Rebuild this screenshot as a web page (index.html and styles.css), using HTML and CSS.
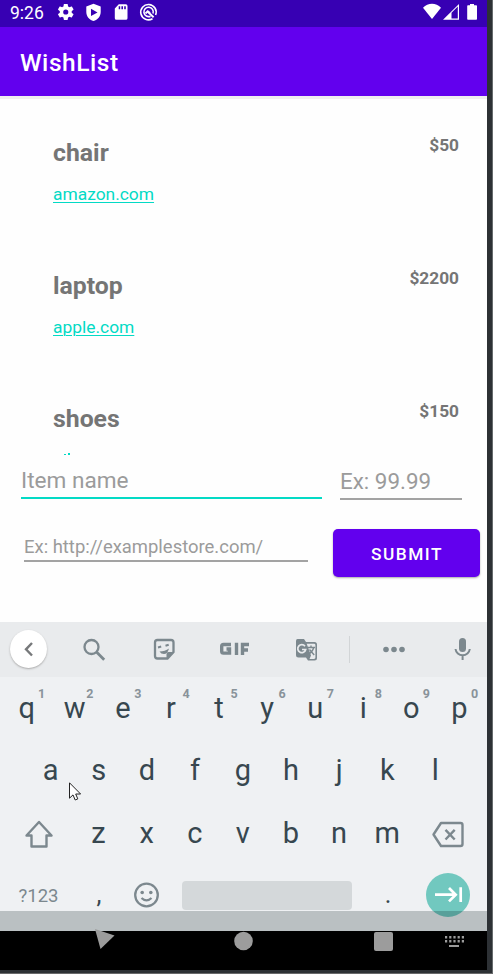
FILE: index.html
```html
<!DOCTYPE html>
<html lang="en">
<head>
<meta charset="utf-8">
<title>WishList</title>
<link rel="stylesheet" href="styles.css">
</head>
<body>
<main class="screen">
  <header class="status">
    <span class="clock">9:26</span>
    <svg class="status-icons" width="100" height="20" viewBox="0 0 100 20" fill="#fff">
      <path transform="translate(-1.200 -1) scale(.83)" d="M19.14 12.94c.04-.3.06-.61.06-.94s-.02-.64-.07-.94l2.03-1.58a.49.49 0 0 0 .12-.61l-1.92-3.32a.49.49 0 0 0-.59-.22l-2.39.96c-.5-.38-1.03-.7-1.62-.94L14.4 2.81a.48.48 0 0 0-.48-.41h-3.84a.47.47 0 0 0-.47.41l-.36 2.54c-.59.24-1.13.57-1.62.94l-2.39-.96a.48.48 0 0 0-.59.22L2.74 8.87a.47.47 0 0 0 .12.61l2.03 1.58c-.05.3-.09.63-.09.94s.02.64.07.94l-2.03 1.58a.49.49 0 0 0-.12.61l1.92 3.32c.12.22.37.29.59.22l2.39-.96c.5.38 1.03.7 1.62.94l.36 2.54c.05.24.24.41.48.41h3.84c.24 0 .44-.17.47-.41l.36-2.54c.59-.24 1.13-.56 1.62-.94l2.39.96c.22.08.47 0 .59-.22l1.92-3.32a.47.47 0 0 0-.12-.61zM12 15.1A3.1 3.1 0 1 1 12 8.900a3.1 3.1 0 0 1 0 6.200z"/>
      <path fill-rule="evenodd" d="M36.500 .8 43.700 3.600V9c0 4.400-3 7.800-7.200 9-4.200-1.200-7.200-4.600-7.200-9V3.600zM34 5.800v7.200L40.500 9.400z"/>
      <path fill-rule="evenodd" d="M61.800 1.200H68.800q1.700 0 1.700 1.700V15.200q0 1.600-1.700 1.600H59.500q-1.700 0-1.700-1.600V5.400zM61.700 3.300V6.300H63.200V3.300zM64.400 3.300V6.300H66V3.300zM67.200 3.300V6.300H68.800V3.300z"/>
      <g fill="none" stroke="#fff"><path stroke-width="1.600" d="M95.500 15.700A7.700 7.700 0 1 1 98.600 12"/><path stroke-width="1.900" d="M96.600 14.200 90.500 8.500"/><path stroke-width="1.600" d="M93.500 13.200A4.700 4.700 0 1 1 96 10.500"/><path stroke-width="1.900" d="M88.500 10.500 90.700 8.200 93 10"/></g>
    </svg>
    <svg class="signal" width="56" height="20" viewBox="0 0 56 20" fill="#fff">
      <path d="M0 4.800C5-.5 13-.5 18 4.800L9 16z"/>
      <path fill-rule="evenodd" d="M20 16.800 36 1V16.800zM28.500 9.800V15.500H34.800V3.500z"/>
      <path d="M47 .9h4V2.200h2.200q.8 0 .8.800V15.900q0 .8-.8.800H45q-.8 0-.8-.800V3q0-.8.800-.800H47z"/>
    </svg>
  </header>
  <div class="appbar"><h1>WishList</h1></div>
  <section class="list">
    <article class="item"><div><h2>chair</h2><a>amazon.com</a></div><strong>$50</strong></article>
    <article class="item"><div><h2>laptop</h2><a>apple.com</a></div><strong>$2200</strong></article>
    <article class="item"><div><h2>shoes</h2></div><strong>$150</strong></article>
    <svg class="peek" width="6" height="2" viewBox="0 0 6 2" fill="#03dac5"><path d="M0 1H2V2H0zM4 0H6V2H4z"/></svg>
  </section>
  <section class="form">
    <div class="fields">
      <div class="field name">Item name</div>
      <div class="field price">Ex: 99.99</div>
    </div>
    <div class="fields second">
      <div class="field url">Ex: http://examplestore.com/</div>
      <button class="submit">SUBMIT</button>
    </div>
  </section>
  <section class="keyboard">
    <div class="tools">
      <span class="back"><svg width="38" height="38" viewBox="0 0 38 38"><path d="M22 13 16 19.300 22 25.500" fill="none" stroke="#77797b" stroke-width="2.400"/></svg></span>
      <svg class="tool-icons" width="440" height="55" viewBox="47 622 440 55" fill="#7c888e">
        <g fill="none" stroke="#7c888e" stroke-width="2.300"><circle cx="91.500" cy="647" r="7"/><path stroke-width="2.800" d="M96.500 652 104.200 659.700"/>
        <path d="M157.500 640H171q2.500 0 2.500 2.500V652l-6 6.500H157.500q-2.500 0-2.500-2.500V642.500q0-2.500 2.500-2.500z"/></g>
        <path d="M166.500 659V654q0-2 2-2H174z"/>
        <path d="M159.500 651.500q5.500 0 9.500-3-1.500 5.500-5 5.500-3 0-4.500-2.500z"/><path d="m158 647.500 3.200-1M165.500 645.700l3.200-1" stroke="#7c888e" stroke-width="2"/>
        <g fill="none" stroke="#7c888e" stroke-width="3.400"><path d="M231 644.500H223.500q-1.800 0-1.800 1.800V651.300q0 1.800 1.800 1.800H229.500V649H226.500M236.500 642.800V655M242.500 655V644.500H249M242.500 650H248"/></g>
        <path d="M297.500 639H304l2 3h8.500q2.500 0 2.500 2.500V658q0 2.500-2.500 2.500H308L306 657.500H298.500q-2.500 0-2.500-2.500V641q0-2 1.500-2z"/>
        <path d="M306.700 643.700H314q1.400 0 1.400 1.400V657.500q0 1.400-1.400 1.400H309.500l1.500-3.500z" fill="#e9ebed"/>
        <path d="M305 646.300A4 4 0 1 0 305.700 649.500H302" fill="none" stroke="#e9ebed" stroke-width="1.700"/>
        <path d="M307.500 647.500H315M311 645.500V647.500M313.700 647.500Q312.500 652 308.500 654M309.500 649.500 314.200 655" fill="none" stroke="#7c888e" stroke-width="1.400"/>
        <path d="M349 636H350V663H349z" fill="#d2d5d7"/>
        <circle cx="386" cy="649.500" r="2.800"/><circle cx="394" cy="649.500" r="2.800"/><circle cx="402" cy="649.500" r="2.800"/>
        <rect x="459" y="638" width="7" height="14" rx="3.500"/><path d="M455.500 649a7.200 7.200 0 0 0 14.300 0M462.600 656V660" fill="none" stroke="#7c888e" stroke-width="2"/>
      </svg>
    </div>
    <div class="row ten">
      <kbd>q<sup>1</sup></kbd><kbd>w<sup>2</sup></kbd><kbd>e<sup>3</sup></kbd><kbd>r<sup>4</sup></kbd><kbd>t<sup>5</sup></kbd><kbd>y<sup>6</sup></kbd><kbd>u<sup>7</sup></kbd><kbd>i<sup>8</sup></kbd><kbd>o<sup>9</sup></kbd><kbd>p<sup>0</sup></kbd>
    </div>
    <div class="row nine"><kbd>a</kbd><kbd>s</kbd><kbd>d</kbd><kbd>f</kbd><kbd>g</kbd><kbd>h</kbd><kbd>j</kbd><kbd>k</kbd><kbd>l</kbd></div>
    <div class="row third">
      <kbd><svg width="28" height="28" viewBox="0 0 28 28" fill="none" stroke="#7c888e" stroke-width="2.400" stroke-linejoin="round"><path d="M14 2 26.500 15.500H21.500V26.500H6.500V15.500H1.500z"/></svg></kbd>
      <kbd>z</kbd><kbd>x</kbd><kbd>c</kbd><kbd>v</kbd><kbd>b</kbd><kbd>n</kbd><kbd>m</kbd>
      <kbd><svg width="32" height="28" viewBox="0 0 32 28" fill="none" stroke="#7c888e" stroke-width="2.400" stroke-linejoin="round"><path d="M9 3H28.500q2 0 2 2V24q0 2-2 2H9L1.500 14.500zM13.500 9.800 22.700 19.500M22.700 9.800 13.500 19.500"/></svg></kbd>
    </div>
    <div class="row fourth">
      <kbd class="mode">?123</kbd><kbd class="comma">,</kbd>
      <kbd><svg width="26" height="26" viewBox="0 0 26 26" fill="none" stroke="#7c888e" stroke-width="2.300"><circle cx="13.500" cy="13" r="11.300"/><path d="M8.500 16q5 4.800 10 0"/><circle cx="9.200" cy="10.500" r="1.800" fill="#7c888e" stroke="none"/><circle cx="17.800" cy="10.500" r="1.800" fill="#7c888e" stroke="none"/></svg></kbd>
      <span class="space"></span><kbd class="dot">.</kbd>
      <span class="enter"><svg width="44" height="44" viewBox="0 0 44 44" fill="none" stroke="#fff" stroke-width="2.700"><path d="M9 21.700H29M23 15 29.700 21.700 23 28.400M34.700 14.300V29"/></svg></span>
    </div>
    <svg class="cursor" width="13" height="20" viewBox="0 0 13 20"><path d="M.5.800V16.200L4 12.900 6.200 18 8.800 16.900 6.700 12H11.600z" fill="#fff" stroke="#222" stroke-width="1"/></svg>
    <div class="shade"></div>
  </section>
  <nav>
    <svg width="487" height="39" viewBox="0 931 487 39" fill="#9c9c9c"><path d="M95 929 114.500 935.500 100.500 949z"/><circle cx="243.500" cy="941" r="9.300"/><rect x="374" y="932" width="19" height="19" rx="2"/><path d="M445 937.300H464M445 941.300H464" stroke="#9c9c9c" stroke-width="2.400" stroke-dasharray="2.200 2"/><path d="M449 945H459V947H449z"/></svg>
  </nav>
</main>
</body>
</html>
```
FILE: styles.css
```css
* { box-sizing: border-box; }
body { margin: 0; width: 493px; height: 974px; overflow: hidden; background: #2d3135; border-right: 1px solid #666b6d; border-bottom: 1px solid #68696a; font-family: Roboto, sans-serif; }
.screen { width: 487px; height: 970px; display: flex; flex-direction: column; background: #fefefe; }
h1, h2 { margin: 0; }
svg { display: block; flex: none; }
.status { height: 27px; flex: none; display: flex; align-items: flex-start; background: #3700b3; color: #fff; padding: 3px 8px 0 10px; }
.clock { width: 47px; font-size: 17.500px; line-height: 20px; }
.status-icons { overflow: visible; }
.signal { margin-left: auto; }
.appbar { height: 69px; flex: none; display: flex; align-items: center; padding: 3px 20px 0; background: #6200ee; color: #fff; box-shadow: 0 3px 0 #efefef; z-index: 1; }
.appbar h1 { font-size: 24.500px; line-height: 30px; font-weight: 500; letter-spacing: .55px; }
.list { height: 359px; flex: none; overflow: hidden; position: relative; }
.item { height: 133px; display: flex; justify-content: space-between; padding: 39px 28px 0 53px; color: #757575; }
.item h2 { padding-top: 2px; font-size: 24.800px; line-height: 32px; font-weight: 700; }
.item a { display: block; margin-top: 13px; font-size: 17.400px; line-height: 24px; color: #03dac5; text-decoration: underline; text-decoration-thickness: 1px; text-underline-offset: 2px; }
.item strong { font-size: 17.300px; line-height: 20px; }
.peek { position: absolute; left: 64px; top: 357px; }
.form { height: 167px; flex: none; padding-top: 9px; }
.fields { display: flex; align-items: flex-start; padding-left: 21px; }
.field { color: #9b9b9b; font-size: 22.600px; white-space: nowrap; }
.name { width: 301px; height: 35px; line-height: 33px; border-bottom: 2px solid #03dac5; }
.price { width: 122px; height: 36px; margin-left: 18px; font-size: 22.400px; line-height: 35px; border-bottom: 2px solid #a3a3a3; }
.second { padding: 29px 0 0 24px; }
.url { width: 284px; height: 33px; font-size: 18.450px; line-height: 36px; border-bottom: 2px solid #a3a3a3; }
.submit { width: 147px; height: 48px; margin-left: 25px; padding: 1px 0 0 1px; border: 0; border-radius: 5px; background: #6200ee; color: #fff; font: 500 17.300px Roboto, sans-serif; letter-spacing: 1.500px; box-shadow: 0 1px 2px #aaa; }
.keyboard { height: 309px; flex: none; background: #eff1f3; position: relative; }
.tools { height: 55px; display: flex; background: #e9ebed; padding-left: 10px; }
.back { width: 37px; height: 38px; margin-top: 8px; border-radius: 50%; background: #fff; box-shadow: 0 1px 2px #aaa; }
.row { display: grid; height: 62px; }
kbd { position: relative; display: flex; align-items: center; justify-content: center; font: 400 29px/36px Roboto, sans-serif; color: #37474f; }
.ten { grid-template-columns: repeat(10, 48.100px); padding-left: 2.600px; }
.ten kbd, .nine kbd { padding-bottom: 1px; }
.nine { grid-template-columns: repeat(9, 48.100px); padding-left: 26.600px; }
.third { height: 63px; grid-template-columns: 60px repeat(7, 48.100px) 72px; padding-left: 14.500px; }
.third kbd { padding-top: 1px; }
.third kbd:first-child { padding: 3px 12px 0 0; }
.third kbd:last-child { padding-top: 3px; padding-left: 1px; }
.fourth { grid-template-columns: 60px 48px 48px 12px 170px 12px 48px 14px 44px; padding: 0 0 0 14px; align-items: center; }
sup { position: absolute; left: 35.500px; top: 9px; font-size: 12.500px; line-height: 16px; font-weight: 700; color: #89939a; }
.mode { font-size: 18.500px; color: #7c888e; padding: 1px 11px 0 0; }
.comma { font-size: 25px; padding-left: 2px; }
.dot { font-size: 25px; }
.space { grid-column: 5; height: 29px; border-radius: 4px; background: #d4d8da; }
.space + kbd { grid-column: 7; }
.enter { grid-column: 9; height: 44px; border-radius: 50%; background: #71c8bf; }
.cursor { position: absolute; left: 69px; top: 160px; }
.shade { position: absolute; left: 0; right: 0; top: 289px; height: 20px; background: rgba(0, 18, 22, .22); }
nav { height: 39px; flex: none; background: #000; }
nav svg { overflow: visible; position: relative; }
```
